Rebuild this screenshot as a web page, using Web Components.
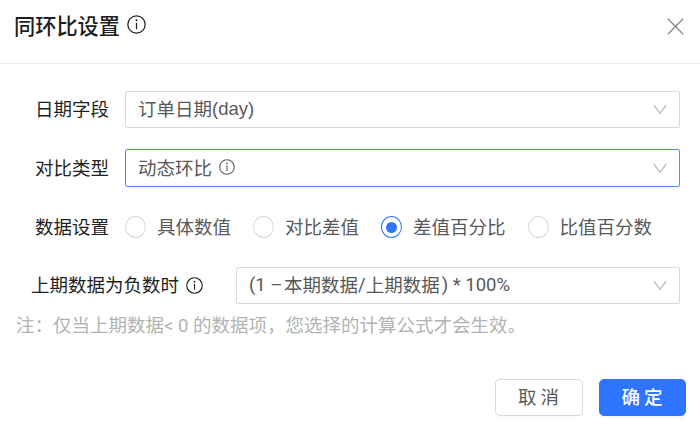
<!DOCTYPE html>
<html lang="zh-CN">
<head>
<meta charset="utf-8">
<title>同环比设置</title>
<style>
  body {
    margin: 0;
    background: #fff;
    font-family: "Noto Sans CJK SC", sans-serif;
    font-size: 18.5px;
    color: #1f1f1f;
  }

  .latin {
    margin-top: 2px;
    font-family: "Liberation Sans", "Noto Sans CJK SC", sans-serif;
  }

  .roboto {
    margin-top: 2px;
    font-family: Roboto, "Noto Sans CJK SC", sans-serif;
    white-space: pre;
  }
</style>
</head>
<body>
<compare-dialog>
  <span slot="title">同环比设置</span>
  <info-icon slot="title" style="--size: 19px"></info-icon>

  <form-row style="--height: 37px">
    <span slot="label">日期字段</span>
    <select-box>订单日期<span class="latin">(day)</span></select-box>
  </form-row>

  <form-row style="--height: 38px; --top: 21px">
    <span slot="label">对比类型</span>
    <select-box focused>动态环比<info-icon style="--size: 16px; margin: 1px 0 0 7px"></info-icon></select-box>
  </form-row>

  <form-row style="--height: 22px; --top: 29px">
    <span slot="label">数据设置</span>
    <radio-item>具体数值</radio-item>
    <radio-item>对比差值</radio-item>
    <radio-item checked>差值百分比</radio-item>
    <radio-item>比值百分数</radio-item>
  </form-row>

  <form-row style="--height: 37px; --top: 29px; --left: 31px; --label: 205px">
    <span slot="label">上期数据为负数时</span>
    <info-icon slot="label" style="--size: 17px; margin: 2px 0 0 7px"></info-icon>
    <select-box><span class="roboto" style="margin-right: -3px">(1 – </span>本期数据<span class="roboto">/</span>上期数据<span class="roboto" style="margin-left: 2px">) * 100%</span></select-box>
  </form-row>

  <span slot="note">注：仅当上期数据<span class="roboto">&lt; 0 </span>的数据项，您选择的计算公式才会生效。</span>

  <dialog-button slot="footer">取 消</dialog-button>
  <dialog-button slot="footer" primary>确 定</dialog-button>
</compare-dialog>

<script>
class BaseElement extends HTMLElement {
  constructor() {
    super()
    this.attachShadow({ mode: "open" }).innerHTML = this.template
  }
}

class CompareDialog extends BaseElement {
  get template() {
    return /* html */ `
      <style>
        :host {
          display: flex;
          flex-direction: column;
          width: 700px;
          height: 434px;
          box-sizing: border-box;
          overflow: hidden;
        }

        header {
          display: flex;
          align-items: flex-start;
          justify-content: space-between;
          height: 63px;
          padding: 0 16px 0 14px;
          border-bottom: 1px solid #ececec;
        }

        h1 {
          display: flex;
          align-items: center;
          gap: 7px;
          height: 48px;
          margin: 0;
          font-size: 21.2px;
          font-weight: 500;
        }

        .close {
          margin-top: 18px;
        }

        main {
          padding: 27px 20px 0 0;
        }

        .note {
          height: 28px;
          margin: 6px 0 0 16px;
          line-height: 28px;
          color: #b3b3b3;
          white-space: nowrap;
        }

        footer {
          display: flex;
          justify-content: flex-end;
          gap: 16px;
          margin-top: 41px;
          padding-right: 14px;
        }
      </style>
      <header>
        <h1><slot name="title"></slot></h1>
        <svg class="close" width="17" height="17" viewBox="0 0 17 17" stroke="#858585" stroke-width="1.3">
          <path d="M.8.8l15.4 15.4M16.2.8L.8 16.2"/>
        </svg>
      </header>
      <main>
        <slot></slot>
        <div class="note"><slot name="note"></slot></div>
      </main>
      <footer><slot name="footer"></slot></footer>
    `
  }
}

class FormRow extends BaseElement {
  get template() {
    return /* html */ `
      <style>
        :host {
          display: flex;
          align-items: stretch;
          height: var(--height);
          margin-top: var(--top, 0);
        }

        .label {
          display: flex;
          align-items: center;
          flex: none;
          box-sizing: border-box;
          width: calc(var(--label, 90px) + var(--left, 35px));
          padding: 0 0 3px var(--left, 35px);
          white-space: nowrap;
        }
      </style>
      <div class="label"><slot name="label"></slot></div>
      <slot></slot>
    `
  }
}

class SelectBox extends BaseElement {
  get template() {
    return /* html */ `
      <style>
        :host {
          display: flex;
          flex: 1;
          align-items: center;
          justify-content: space-between;
          box-sizing: border-box;
          padding: 0 12px;
          border: 1px solid #d9d9d9;
          border-radius: 2px;
          color: #595959;
        }

        :host([focused]) {
          border-color: #4a8df0;
        }

        .value {
          display: flex;
          align-items: center;
          padding-bottom: 3px;
          white-space: nowrap;
        }
      </style>
      <div class="value"><slot></slot></div>
      <svg width="14" height="11" viewBox="0 0 14 11" fill="none" stroke="#bfbfbf" stroke-width="1.3">
        <path d="M.8 1L7 9.3 13.2 1"/>
      </svg>
    `
  }
}

class RadioItem extends BaseElement {
  get template() {
    return /* html */ `
      <style>
        :host {
          display: flex;
          align-items: center;
          margin-right: 22px;
          color: #595959;
          white-space: nowrap;
        }

        .circle {
          display: flex;
          align-items: center;
          justify-content: center;
          box-sizing: border-box;
          width: 21px;
          height: 22px;
          margin-right: 11px;
          border: 1px solid #d9d9d9;
          border-radius: 50%;
        }

        .text {
          padding-bottom: 3px;
        }

        :host([checked]) .circle {
          border-color: #2f74ff;
        }

        :host([checked]) .circle::after {
          content: '';
          width: 11px;
          height: 11px;
          border-radius: 50%;
          background: #2f74ff;
        }
      </style>
      <span class="circle"></span>
      <span class="text"><slot></slot></span>
    `
  }
}

class InfoIcon extends BaseElement {
  get template() {
    return /* html */ `
      <style>
        :host {
          display: inline-flex;
          flex: none;
          width: var(--size);
          height: var(--size);
        }
      </style>
      <svg width="100%" height="100%" viewBox="0 0 18 18" fill="none" stroke="currentColor" stroke-width="1.2">
        <circle cx="9" cy="9" r="8.2"/>
        <path d="M9 7.4v6"/>
        <circle cx="9" cy="5" r=".95" fill="currentColor" stroke="none"/>
      </svg>
    `
  }
}

class DialogButton extends BaseElement {
  get template() {
    return /* html */ `
      <style>
        :host {
          display: flex;
        }

        button {
          width: 88px;
          height: 37px;
          padding: 0 1px 2px 0;
          border: 1px solid #d9d9d9;
          border-radius: 5px;
          background: #fff;
          box-shadow: 0 2px 1px rgba(0, 0, 0, 0.02);
          color: #595959;
          font: inherit;
          line-height: 33px;
        }

        :host([primary]) button {
          width: 87px;
          border-color: #2f74ff;
          background: #2f74ff;
          box-shadow: 0 2px 1px rgba(0, 0, 0, 0.04);
          color: #fff;
          font-weight: 500;
        }
      </style>
      <button type="button"><slot></slot></button>
    `
  }
}

customElements.define("compare-dialog", CompareDialog)
customElements.define("form-row", FormRow)
customElements.define("select-box", SelectBox)
customElements.define("radio-item", RadioItem)
customElements.define("info-icon", InfoIcon)
customElements.define("dialog-button", DialogButton)
</script>
</body>
</html>
